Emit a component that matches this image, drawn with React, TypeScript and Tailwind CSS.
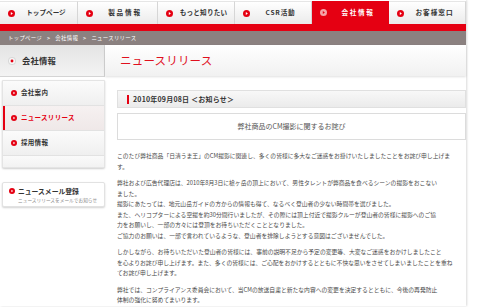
import type { ReactNode } from 'react';

const tabs = [
    { label: 'トップページ', w: 'w-[78px]', track: 'tracking-[0px]' },
    { label: '製品情報', w: 'w-[80px]', track: 'tracking-[1.8px]' },
    { label: 'もっと知りたい', w: 'w-[77px]', track: 'tracking-[0.2px]' },
    { label: 'CSR活動', w: 'w-[77px]', track: 'tracking-[0.8px]' },
    { label: '会社情報', w: 'w-[77px]', track: 'tracking-[1.6px]', active: true },
    { label: 'お客様窓口', w: 'w-[77px]', track: 'tracking-[1px]' },
];

function Dot({ active = false, size = 7 }: { active?: boolean; size?: number }) {
    return (
        <svg width={size} height={size} viewBox="0 0 10 10" className="shrink-0">
            <circle cx="5" cy="5" r="5" fill={active ? '#f4a3a8' : '#e50012'} />
            <path d="M4 2.8 L7 5 L4 7.2 Z" fill={active ? '#e50012' : '#ffffff'} />
        </svg>
    );
}

function HeadDot() {
    return (
        <svg width="8" height="8" viewBox="0 0 10 10" className="shrink-0">
            <circle cx="5" cy="5" r="4.6" fill="#f6f6f6" stroke="#c8c8c8" strokeWidth="0.8" />
            <circle cx="5" cy="5" r="1.8" fill="#e50012" />
        </svg>
    );
}

function MenuItem({ label, active = false }: { label: string; active?: boolean }) {
    return (
        <div
            className={
                'relative h-[25px] flex items-center gap-[4px] pl-[8px] border-b border-[#e2e2e2] ' +
                (active
                    ? 'bg-gradient-to-b from-[#f6f1f1] to-[#efe8e8] text-[#e50012]'
                    : 'bg-gradient-to-b from-[#fbfbfb] to-[#efefef] text-[#333]')
            }
        >
            {active && <div className="absolute left-0 top-0 bottom-0 w-[2px] bg-[#e50012]" />}
            <Dot size={6} />
            <span className="text-[6.5px] font-bold tracking-[0.3px]">{label}</span>
        </div>
    );
}

function Line({ children }: { children: ReactNode }) {
    return <div className="whitespace-nowrap">{children}</div>;
}

export default function App() {
    return (
        <div className="w-[480px] h-[307px] bg-white overflow-hidden font-['Noto_Sans_CJK_JP','Liberation_Sans',sans-serif]">
            <div className="w-[466px] shadow-[1px_0_2px_rgba(0,0,0,0.15)]">
                {/* top nav */}
                <div className="flex h-[24px]">
                    {tabs.map((t) => (
                        <div
                            key={t.label}
                            className={
                                t.w +
                                ' flex items-center pl-[8px] ' +
                                (t.active
                                    ? 'bg-[#e50012] text-white mt-[1px]'
                                    : 'bg-gradient-to-b from-[#ffffff] to-[#ebebeb] text-[#333] border-r border-[#d6d6d6] mt-[1px] border-t border-t-[#e6e6e6]')
                            }
                        >
                            <Dot active={t.active} />
                            <span className={'flex-1 text-center text-[6.6px] font-bold ' + t.track}>{t.label}</span>
                        </div>
                    ))}
                </div>
                <div className="h-[7px] bg-[#e50012]" />
                <div className="h-[14px] bg-[#8b8180] flex items-center pl-[8px] text-white text-[5.4px] tracking-[0.3px] gap-[5px]">
                    <span>トップページ</span>
                    <span>&gt;</span>
                    <span>会社情報</span>
                    <span>&gt;</span>
                    <span>ニュースリリース</span>
                </div>

                <div className="flex">
                    {/* sidebar */}
                    <div className="w-[105px] shrink-0">
                        <div className="h-[32px] flex items-center gap-[6px] pl-[8px] bg-gradient-to-b from-[#e4e4e4] to-[#f3f3f3] border-r border-b border-[#d4d4d4]">
                            <HeadDot />
                            <span className="text-[8.3px] text-[#333] font-bold tracking-[0.2px]">会社情報</span>
                        </div>
                        <div className="ml-[2px] mt-[3px] bg-[#f7f7f7] rounded-b-[2px] shadow-[0_1px_2px_rgba(0,0,0,0.2)] border border-[#e4e4e4]">
                            <MenuItem label="会社案内" />
                            <MenuItem label="ニュースリリース" active />
                            <MenuItem label="採用情報" />
                            <div className="h-[11px] bg-gradient-to-b from-[#fafafa] to-[#f2f2f2]" />
                        </div>
                        <div className="ml-[2px] mt-[14px] h-[25px] bg-white rounded-[2px] border border-[#e2e2e2] shadow-[0_1px_2px_rgba(0,0,0,0.18)] pl-[6px] pt-[3px]">
                            <div className="flex items-center gap-[3px]">
                                <Dot size={6} />
                                <span className="text-[6.8px] font-bold text-[#333]">ニュースメール登録</span>
                            </div>
                            <div className="pl-[9px] text-[4.7px] text-[#888] leading-[8px]">ニュースリリースをメールでお知らせ</div>
                        </div>
                    </div>

                    {/* main */}
                    <div className="flex-1 min-w-0">
                        <div className="h-[31px] flex items-center pl-[15px] bg-gradient-to-b from-[#ffffff] to-[#f1f1f1] shadow-[0_1px_2px_rgba(0,0,0,0.12)]">
                            <span className="text-[11.5px] text-[#e0101e] tracking-[0.2px]">ニュースリリース</span>
                        </div>
                        <div className="pl-[12px] pt-[14px]">
                            <div className="h-[18px] flex items-center pl-[9px] gap-[4px] bg-gradient-to-b from-[#f8f8f8] to-[#ebebeb] border border-[#e0e0e0]">
                                <div className="w-[2px] h-[9px] bg-[#e50012]" />
                                <span className="text-[7px] font-bold text-[#333] tracking-[0.2px]">2010年09月08日 ＜お知らせ＞</span>
                            </div>
                            <div className="mt-[5px] h-[27px] flex items-center justify-center bg-white border border-[#dcdcdc] text-[7px] text-[#555]">
                                弊社商品のCM撮影に関するお詫び
                            </div>
                            <div className="mt-[11px] text-[5.8px] leading-[10.5px] text-[#4a4a4a]">
                                <Line>このたび弊社商品「日清うま王」のCM撮影に関連し、多くの皆様に多大なご迷惑をお掛けいたしましたことをお詫び申し上げま</Line>
                                <Line>す。</Line>
                                <div className="h-[6px]" />
                                <Line>弊社および広告代理店は、2010年8月3日に槍ヶ岳の頂上において、男性タレントが弊商品を食べるシーンの撮影をおこない</Line>
                                <Line>ました。</Line>
                                <Line>撮影にあたっては、地元山岳ガイドの方からの情報も得て、なるべく登山者の少ない時間帯を選びました。</Line>
                                <Line>また、ヘリコプターによる空撮を約30分間行いましたが、その際には頂上付近で撮影クルーが登山者の皆様に撮影へのご協</Line>
                                <Line>力をお願いし、一部の方々には登頂をお待ちいただくこととなりました。</Line>
                                <Line>ご協力のお願いは、一部で言われているような、登山者を排除しようとする意図はございませんでした。</Line>
                                <div className="h-[6px]" />
                                <Line>しかしながら、お待ちいただいた登山者の皆様には、事前の説明不足から予定の変更等、大変なご迷惑をおかけしましたこと</Line>
                                <Line>を心よりお詫び申し上げます。また、多くの皆様には、ご心配をおかけするとともに不快な思いをさせてしまいましたことを重ね</Line>
                                <Line>てお詫び申し上げます。</Line>
                                <div className="h-[6px]" />
                                <Line>弊社では、コンプライアンス委員会において、当CMの放送自粛と新たな内容への変更を決定するとともに、今後の再発防止</Line>
                                <Line>体制の強化に努めてまいります。</Line>
                            </div>
                        </div>
                    </div>
                </div>
            </div>
        </div>
    );
}
